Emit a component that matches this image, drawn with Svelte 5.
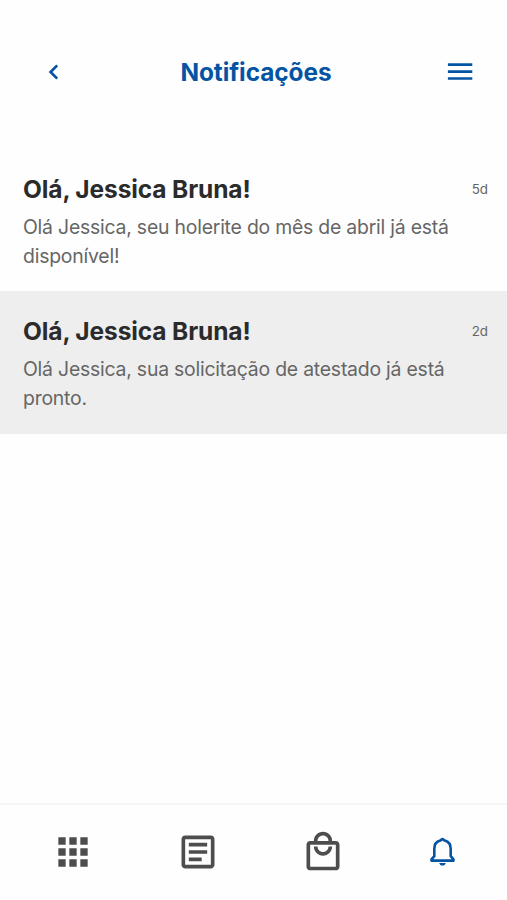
<script>
  let notifications = $state([
    {
      id: 1,
      title: 'Olá, Jessica Bruna!',
      text: 'Olá Jessica, seu holerite do mês de abril já está disponível!',
      time: '5d',
      highlighted: false
    },
    {
      id: 2,
      title: 'Olá, Jessica Bruna!',
      text: 'Olá Jessica, sua solicitação de atestado já está pronto.',
      time: '2d',
      highlighted: true
    }
  ]);
</script>

<div class="screen">
  <header class="header">
    <button class="icon-btn" aria-label="Voltar">
      <svg width="26" height="26" viewBox="0 0 26 26">
        <path d="M17.2 6.4 10.6 13l6.6 6.6" fill="none" stroke="currentColor" stroke-width="2.7" />
      </svg>
    </button>
    <h1>Notificações</h1>
    <button class="icon-btn" aria-label="Menu">
      <svg width="26" height="26" viewBox="0 0 26 26">
        <path d="M.9 5.7h24.4M.9 12.6h24.4M.9 19.5h24.4" fill="none" stroke="currentColor" stroke-width="2.7" />
      </svg>
    </button>
  </header>

  <main class="list">
    {#each notifications as item (item.id)}
      <article class="item" class:highlighted={item.highlighted}>
        <div class="item-header">
          <h2>{item.title}</h2>
          <span class="time">{item.time}</span>
        </div>
        <p>{item.text}</p>
      </article>
    {/each}
  </main>

  <nav class="tabs">
    <button class="tab" aria-label="Início">
      <svg width="44" height="44" viewBox="0 0 24 24" fill="currentColor">
        <path d="M4 8h4V4H4v4zm6 12h4v-4h-4v4zm-6 0h4v-4H4v4zm0-6h4v-4H4v4zm6 0h4v-4h-4v4zm6-10v4h4V4h-4zm-6 4h4V4h-4v4zm6 6h4v-4h-4v4zm0 6h4v-4h-4v4z" />
      </svg>
    </button>
    <button class="tab" aria-label="Documentos">
      <svg width="44" height="44" viewBox="0 0 24 24" fill="currentColor">
        <path d="M19 5v14H5V5h14m0-2H5c-1.1 0-2 .9-2 2v14c0 1.1.9 2 2 2h14c1.1 0 2-.9 2-2V5c0-1.1-.9-2-2-2zm-5 14H7v-2h7v2zm3-4H7v-2h10v2zm0-4H7V7h10v2z" />
      </svg>
    </button>
    <button class="tab" aria-label="Loja">
      <svg width="44" height="44" viewBox="0 0 24 24" fill="currentColor">
        <path d="M19 6h-2c0-2.76-2.24-5-5-5S7 3.24 7 6H5c-1.1 0-2 .9-2 2v12c0 1.1.9 2 2 2h14c1.1 0 2-.9 2-2V8c0-1.1-.9-2-2-2zm-7-3c1.66 0 3 1.34 3 3H9c0-1.66 1.34-3 3-3zm7 17H5V8h14v12zm-7-8c-1.66 0-3-1.34-3-3H7c0 2.76 2.24 5 5 5s5-2.24 5-5h-2c0 1.66-1.34 3-3 3z" />
      </svg>
    </button>
    <button class="tab active" aria-label="Notificações">
      <svg width="33" height="44" viewBox="5.5 0 33 44">
        <path d="M22 9c-.8 0-1.3 1.2-2.3 1.6-3.7 1-5.9 4.2-5.9 8.3v7.3l-2.800 3.200v1.200h22v-1.200l-2.800-3.200v-7.300c0-4.100-2.200-7.300-5.900-8.300C23.300 10.200 22.800 9 22 9z" fill="none" stroke="currentColor" stroke-width="2.6" stroke-linejoin="round" />
        <path d="M18.7 32.9h6.6c-.4 1.700-1.600 2.600-3.300 2.600s-2.900-.9-3.300-2.600z" fill="currentColor" />
      </svg>
    </button>
  </nav>
</div>

<style>
  :global(body) {
    margin: 0;
    background: #fefefe;
  }

  .screen {
    display: flex;
    flex-direction: column;
    height: 900px;
    background: #fefefe;
    font-family: Inter, 'Liberation Sans', sans-serif;
  }

  /* Header */
  .header {
    display: flex;
    align-items: center;
    justify-content: space-between;
    box-sizing: border-box;
    height: 149px;
    padding: 0 34px 5px 40px;
    color: #0454a4;
  }

  h1 {
    margin: 0 1px 0 0;
    font-size: 24.4px;
    font-weight: 700;
    letter-spacing: -0.06px;
    line-height: 30px;
  }

  button {
    display: flex;
    padding: 0;
    border: none;
    background: none;
    color: inherit;
    cursor: pointer;
  }

  svg {
    display: block;
  }

  /* Notifications */
  .list {
    flex: 1;
  }

  .item {
    box-sizing: border-box;
    height: 142.4px;
    padding: 24px 19px 0 23px;
  }

  .item.highlighted {
    background: #eee;
  }

  .item-header {
    display: flex;
    align-items: center;
    justify-content: space-between;
  }

  h2 {
    margin: 0;
    color: #2b2b2b;
    font-size: 24.5px;
    font-weight: 700;
    letter-spacing: -0.12px;
    line-height: 32px;
  }

  .time {
    color: #666;
    font-size: 13.4px;
    line-height: 16px;
  }

  p {
    max-width: 440px;
    margin: 8px 0 0;
    color: #666;
    font-size: 19.4px;
    letter-spacing: -0.21px;
    line-height: 28.5px;
  }

  /* Bottom navigation */
  .tabs {
    display: flex;
    align-items: center;
    justify-content: space-between;
    box-sizing: border-box;
    height: 97px;
    padding: 0 48px 1px 51px;
    border-top: 2px solid #f5f5f5;
    color: #4d4d4d;
  }

  .tab.active {
    color: #0454a4;
  }
</style>
